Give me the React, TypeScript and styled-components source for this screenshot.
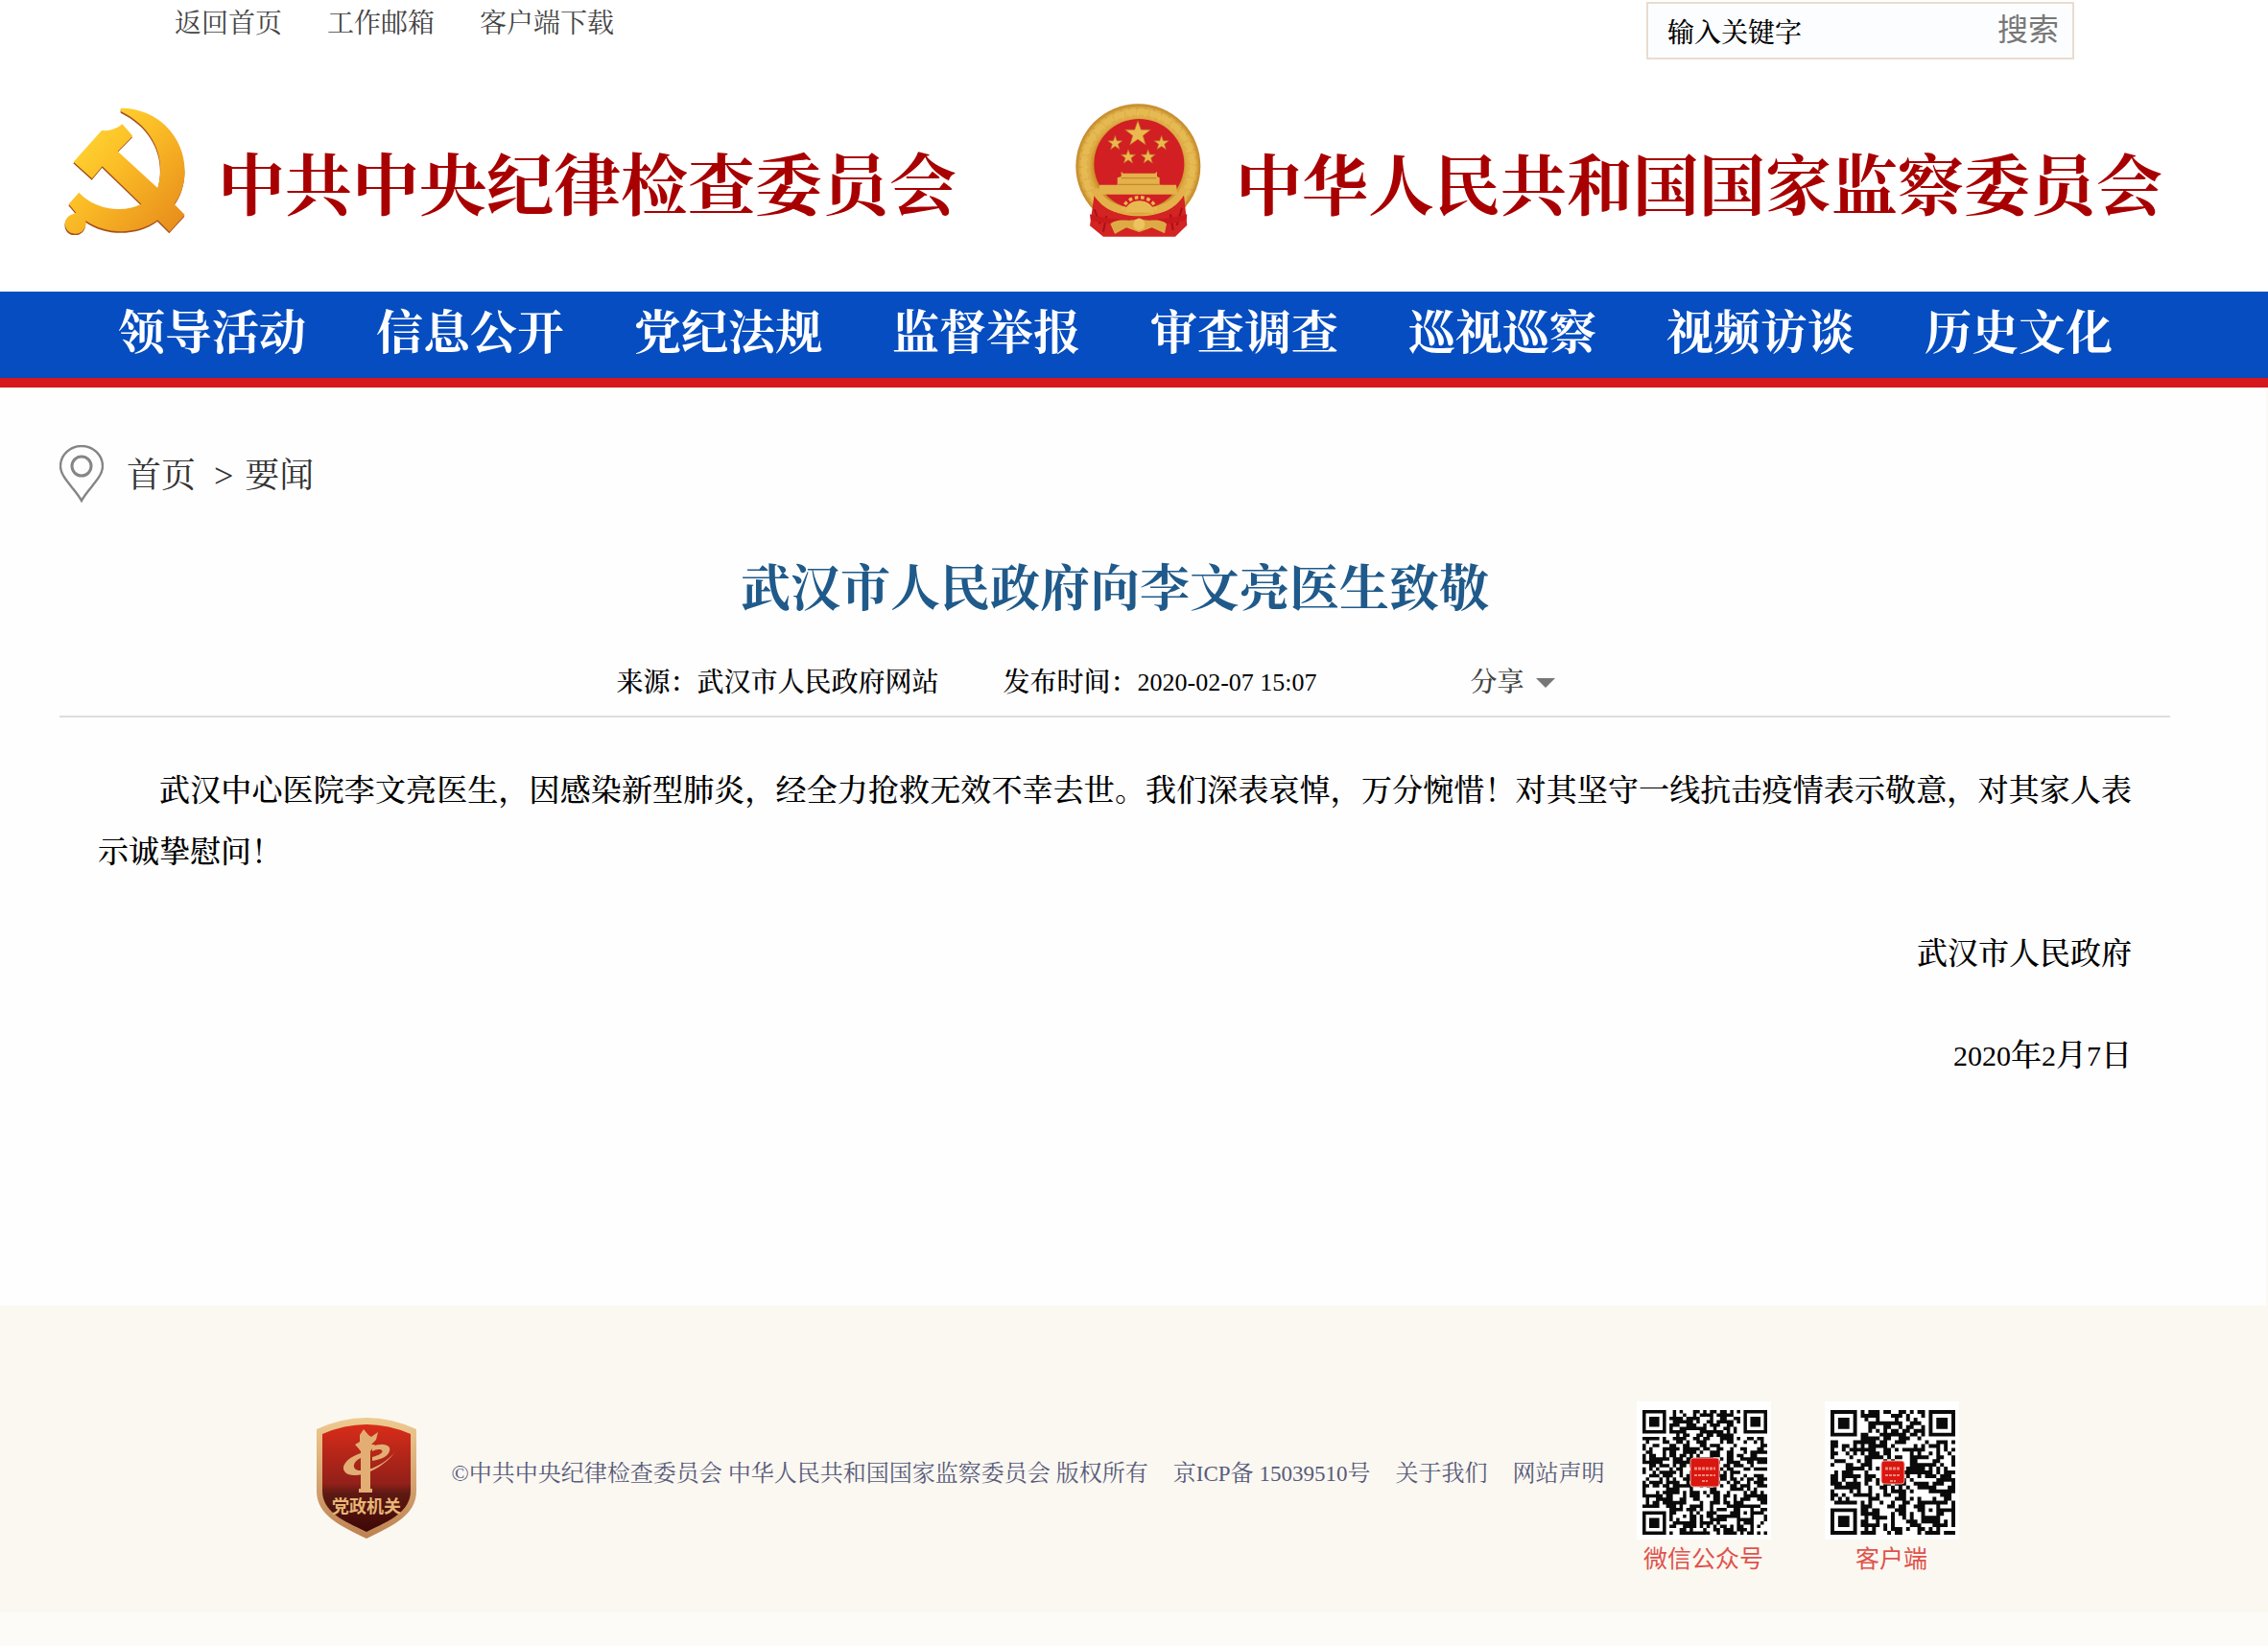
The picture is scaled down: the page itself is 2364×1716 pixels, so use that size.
import React from "react";
import styled, { createGlobalStyle } from "styled-components";

const serif = `"Liberation Serif", "Noto Serif CJK SC", "Noto Sans CJK SC", serif`;
const sans = `"Noto Sans CJK SC", sans-serif`;

const GlobalStyle = createGlobalStyle`
  *, *::before, *::after { box-sizing: border-box; }
  body { margin: 0; background: #fcfbf8; font-family: ${serif}; color: #000; }
  a { color: inherit; text-decoration: none; }
  h1, p, ul, figure { margin: 0; padding: 0; }
  ul { list-style: none; }
  button, input { font: inherit; }
  svg { display: block; flex: none; }
`;

const Page = styled.div`
  background: #fefefe;
  box-shadow: inset -2px 0 #fcf9f3;
`;

const Container = styled.div`
  max-width: 2240px;
  margin: 0 auto;
  padding-right: 40px;
`;

/* ---------- header ---------- */

const Header = styled.header`
  background: #fff;
`;

const TopBar = styled.div`
  display: flex;
  justify-content: space-between;
  align-items: flex-start;
  padding: 2px 100px 0 120px;
`;

const TopLinks = styled.nav`
  display: flex;
  gap: 47px;
  font-size: 28px;
  line-height: 46px;
  color: #444;
`;

const SearchForm = styled.form`
  display: flex;
  align-items: center;
  width: 446px;
  height: 60px;
  border: 2px solid #e9dccf;
  background: #fcfdff;
`;

const SearchInput = styled.input`
  flex: 1;
  min-width: 0;
  height: 56px;
  padding: 0 20px;
  border: 0;
  outline: 0;
  background: transparent;
  font-size: 28px;
  font-weight: 500;
  color: #000;
`;

const SearchButton = styled.button`
  padding: 0 14px 8px 0;
  border: 0;
  background: transparent;
  font-family: ${sans};
  font-size: 32px;
  line-height: 48px;
  color: #777;
`;

const Brands = styled.div`
  display: flex;
  justify-content: space-between;
  padding: 44px 8px 55px 3px;
`;

const Brand = styled.a<{ $gap: number; $size: number }>`
  display: flex;
  align-items: center;
  gap: ${(p) => p.$gap}px;
  font-size: ${(p) => p.$size}px;
  font-weight: 700;
  line-height: 106px;
  color: #a80000;
  white-space: nowrap;
`;

const BrandName = styled.span`
  padding-top: 36px;
`;

const MainNav = styled.nav`
  background: #054dc0;
  border-bottom: 10px solid #d6181c;
`;

const NavList = styled.ul`
  display: flex;
  justify-content: space-between;
  padding: 0 60px 2px 61px;
  font-size: 49px;
  font-weight: 700;
  line-height: 88px;
  color: #fff;
  white-space: nowrap;
`;

/* ---------- article ---------- */

const Crumbs = styled.nav`
  display: flex;
  align-items: center;
  padding-top: 60px;
  font-size: 36px;
  line-height: 56px;
  color: #333;
`;

const CrumbText = styled.div`
  display: flex;
  padding: 4px 0 0 24px;
`;

const CrumbSeparator = styled.span`
  margin: 0 12px 0 19px;
`;

const Title = styled.h1`
  padding-top: 53px;
  font-size: 52px;
  font-weight: 700;
  line-height: 76px;
  text-align: center;
  color: #1f5a8a;
`;

const Meta = styled.div`
  display: flex;
  justify-content: center;
  align-items: center;
  padding: 32px 61px 7px 0;
  border-bottom: 2px solid #ddd;
  font-size: 28px;
  font-weight: 500;
  line-height: 54px;
`;

const PublishTime = styled.span`
  display: flex;
  margin: 0 160px 0 67px;
`;

const Clock = styled.time`
  font-size: 26px;
`;

const ShareButton = styled.button`
  display: flex;
  align-items: center;
  gap: 12px;
  padding: 0;
  border: 0;
  background: transparent;
  color: #444;
`;

const Caret = styled.span`
  border: 10px solid transparent;
  border-top-color: #777;
  border-bottom: 0;
`;

const Body = styled.article`
  padding: 44px 40px 228px;
  font-size: 32px;
  font-weight: 500;
  line-height: 64px;
`;

const Paragraph = styled.p`
  text-indent: 2em;
  text-align: justify;
`;

const SignOff = styled.p`
  padding-top: 42px;
  text-align: right;
`;

const Figures = styled.span<{ $size: number }>`
  font-size: ${(p) => p.$size}px;
`;

/* ---------- footer ---------- */

const Footer = styled.footer`
  display: flex;
  justify-content: center;
  align-items: flex-start;
  min-height: 320px;
  padding: 100px 0 38px 8px;
  background: #fbf8f1;
`;

const FooterLane = styled.div`
  display: flex;
  align-items: center;
  height: 150px;
  gap: 36px;
`;

const BadgeLink = styled.a`
  padding-top: 10px;
`;

const FooterText = styled.div`
  display: flex;
  gap: 26px;
  font-size: 24px;
  line-height: 36px;
  color: #585b7b;
  white-space: nowrap;
`;

const Codes = styled.div`
  display: flex;
  gap: 56px;
  margin-left: 33px;
`;

const CodeFigure = styled.figure`
  width: 140px;
`;

const CodeCaption = styled.figcaption`
  font-family: ${sans};
  font-size: 25px;
  line-height: 36px;
  text-align: center;
  color: #e0524c;
`;

/* ---------- drawings ---------- */

const sicklePath =
  "M228 68 C340 68 428 155 428 265 C428 305 415 343 395 368 L428 402 L380 455 L343 418 C280 465 180 465 118 420 C122 445 105 461 85 461 C50 461 42 415 72 402 L88 395 L65 368 L97 332 C150 388 235 396 292 368 L170 250 L138 288 L80 236 L168 138 C190 140 212 135 232 118 L265 155 L218 203 L343 318 C370 230 335 130 228 78Z";

function PartyEmblem() {
  return (
    <svg width="130" height="135" viewBox="45 60 390 405" aria-hidden="true">
      <defs>
        <linearGradient id="gold" x1="0" y1="0" x2="1" y2="1">
          <stop offset="0.1" stopColor="#ffd934" />
          <stop offset="0.45" stopColor="#fbbd26" />
          <stop offset="1" stopColor="#e5881a" />
        </linearGradient>
      </defs>
      <path d={sicklePath} fill="#a6501c" transform="translate(-1 5)" />
      <path d={sicklePath} fill="url(#gold)" />
    </svg>
  );
}

function starPoints(cx: number, cy: number, r: number) {
  return Array.from({ length: 10 }, (_, i) => {
    const radius = i % 2 ? r * 0.4 : r;
    const angle = (Math.PI / 5) * i - Math.PI / 2;
    return `${(cx + radius * Math.cos(angle)).toFixed(1)},${(cy + radius * Math.sin(angle)).toFixed(1)}`;
  }).join(" ");
}

const stars: [number, number, number][] = [
  [258, 149, 42],
  [187, 178, 24],
  [332, 178, 24],
  [228, 221, 24],
  [290, 221, 24],
];

function StateEmblem() {
  return (
    <svg width="132" height="143" viewBox="60 48 396 429" aria-hidden="true">
      <defs>
        <radialGradient id="rim" cx="0.5" cy="0.5" r="0.5">
          <stop offset="0.7" stopColor="#c98b22" />
          <stop offset="0.84" stopColor="#eec45c" />
          <stop offset="1" stopColor="#c48a2a" />
        </radialGradient>
      </defs>
      <circle cx="259" cy="250" r="195" fill="url(#rim)" />
      <circle cx="259" cy="250" r="168" fill="none" stroke="#dfae48" strokeWidth="34" strokeDasharray="18 6" />
      <circle cx="259" cy="250" r="170" fill="none" stroke="#e6ba52" strokeWidth="18" strokeDasharray="34 4" />
      <circle cx="262" cy="243" r="141" fill="#d11f24" />
      <path d="M122 338 L108 436 L150 470 L375 470 L412 434 L402 338 C372 385 330 404 262 406 C195 404 150 385 122 338Z" fill="#d32322" />
      <path d="M122 385 L140 430 M396 380 L380 435 M360 400 L368 450 M160 405 L150 455" stroke="#a31318" strokeWidth="6" fill="none" />
      <path d="M110 325 C150 395 200 400 228 392 L225 378 C180 370 150 350 132 318Z M412 325 C376 392 325 402 296 392 L300 378 C345 370 375 350 394 318Z" fill="#e3b04a" />
      {stars.map(([x, y, r]) => (
        <polygon key={`${x}-${y}`} points={starPoints(x, y, r)} fill="#ecb850" stroke="#b86a1c" strokeWidth="2" />
      ))}
      <path d="M206 266 L212 272 H312 L318 266 V282 L326 286 V308 H378 L382 338 H134 L138 308 H194 V286 L206 282Z" fill="#e4b14b" />
      <path d="M206 287 H316 M196 307 H328" stroke="#c58a2c" strokeWidth="4" />
      <path d="M218 395 C218 345 308 345 308 395Z" fill="#e8b951" />
      <path d="M212 388 A50 40 0 0 1 314 388" fill="none" stroke="#e8b951" strokeWidth="10" strokeDasharray="11 8" />
      <path d="M108 400 C180 425 340 425 412 400 L410 418 C340 440 180 440 110 418Z" fill="#c9191d" />
      <path d="M172 430 C200 408 235 428 262 412 C290 428 322 408 348 430 L342 460 L302 442 L262 456 L222 442 L186 462Z" fill="#ddab45" />
      <circle cx="262" cy="432" r="18" fill="#edc35f" />
    </svg>
  );
}

function PinIcon() {
  return (
    <svg width="46" height="60" viewBox="0 0 46 60" fill="none" stroke="#858585" strokeWidth="2.4" aria-hidden="true">
      <path d="M23 58 C16 45 1 34 1 22 A22 21 0 0 1 45 22 C45 34 30 45 23 58Z" />
      <circle cx="23" cy="22" r="10" strokeWidth="3" />
    </svg>
  );
}

const BadgeLabel = styled.text`
  font-family: ${sans};
  font-size: 18px;
  font-weight: 700;
  fill: #e6b677;
`;

function GovernmentBadge() {
  return (
    <svg width="104" height="126" viewBox="0 0 104 126" role="img" aria-label="党政机关">
      <defs>
        <linearGradient id="shield" x1="0" y1="0" x2="0" y2="1">
          <stop offset="0" stopColor="#d92c1a" />
          <stop offset="0.35" stopColor="#ab2418" />
          <stop offset="0.55" stopColor="#93201a" />
          <stop offset="0.64" stopColor="#5f1913" />
          <stop offset="1" stopColor="#3d0806" />
        </linearGradient>
        <linearGradient id="frame" x1="0" y1="0" x2="0" y2="1">
          <stop offset="0" stopColor="#efcb91" />
          <stop offset="1" stopColor="#bd8152" />
        </linearGradient>
      </defs>
      <path d="M0 12 Q52 -12 104 12 V76 C104 102 80 112 52 126 C24 112 0 102 0 76Z" fill="url(#frame)" />
      <path d="M6 17 Q52 -3 98 17 V76 C98 98 77 107 52 119 C27 107 6 98 6 76Z" fill="url(#shield)" />
      <g fill="#e2ae74">
        <path d="M49 12 L54 18 L57 20 L64 15 L62 23 L57 28 L56 34 V76 H46 V34 L40 28 L45 25 V18Z" />
        <path d="M41 28 H61 L56 35 H46Z" />
        <path d="M58 30 C70 25 80 29 75 37 C72 42 64 44 58 45 V41 C66 39 70 36 68 34 C66 32 62 33 58 35Z" />
        <path d="M46 37 C30 42 22 54 33 59 C50 64 74 48 83 34 C76 44 60 55 46 55 C36 55 37 46 46 42Z" />
        <rect x="44" y="74" width="14" height="4" />
      </g>
      <BadgeLabel x="52" y="99" textAnchor="middle">
        党政机关
      </BadgeLabel>
    </svg>
  );
}

/** Dark modules of a code: three finders, one alignment mark and a seeded fill. */
function buildModules(size: number, seed: number) {
  let state = seed;
  const random = () => {
    state = (state * 1103515245 + 12345) % 2147483648;
    return state / 2147483648;
  };
  const ring = (dx: number, dy: number) => Math.max(Math.abs(dx), Math.abs(dy));
  let d = "";
  for (let y = 0; y < size; y++) {
    for (let x = 0; x < size; x++) {
      let dark = random() < 0.55;
      const corners = [
        [3, 3],
        [size - 4, 3],
        [3, size - 4],
      ];
      for (const [cx, cy] of corners) {
        const r = ring(x - cx, y - cy);
        if (r <= 4) dark = r === 3 || r <= 1;
      }
      const a = ring(x - (size - 7), y - (size - 7));
      if (a <= 2) dark = a !== 1;
      if (dark) d += `M${x} ${y}h1v1h-1z`;
    }
  }
  return d;
}

interface QrProps {
  size: number;
  seed: number;
  logo: number;
}

function QrCode({ size, seed, logo }: QrProps) {
  const scale = 130 / size;
  const corner = (140 - logo) / 2;
  return (
    <svg width="140" height="144" viewBox="0 0 140 144" aria-hidden="true">
      <rect width="140" height="144" fill="#fff" />
      <path d={buildModules(size, seed)} transform={`translate(6 9) scale(${scale})`} fill="#0a0a0a" />
      <rect x={corner + 1} y={corner + 4} width={logo} height={logo} rx="3" fill="#d9160f" stroke="#f3a8a0" />
      <g stroke="#f08a80" strokeDasharray="3 1">
        <path d={`M${corner + 5} 70h${logo - 8}`} strokeWidth="3" />
        <path d={`M${corner + 5} 77h${logo - 8}`} strokeWidth="2" />
        <path d="M68 83h6" strokeWidth="2" />
      </g>
    </svg>
  );
}

/* ---------- page ---------- */

const topLinks = ["返回首页", "工作邮箱", "客户端下载"];
const sections = ["领导活动", "信息公开", "党纪法规", "监督举报", "审查调查", "巡视巡察", "视频访谈", "历史文化"];

export default function App() {
  return (
    <>
      <GlobalStyle />
      <Page>
        <Header>
          <Container>
            <TopBar>
              <TopLinks>
                {topLinks.map((label) => (
                  <a href="#" key={label}>
                    {label}
                  </a>
                ))}
              </TopLinks>
              <SearchForm onSubmit={(event) => event.preventDefault()}>
                <SearchInput type="text" aria-label="输入关键字" defaultValue="输入关键字" />
                <SearchButton type="submit">搜索</SearchButton>
              </SearchForm>
            </TopBar>
            <Brands>
              <Brand href="#" $gap={32} $size={70}>
                <PartyEmblem />
                <BrandName>中共中央纪律检查委员会</BrandName>
              </Brand>
              <Brand href="#" $gap={36} $size={69}>
                <StateEmblem />
                <BrandName>中华人民共和国国家监察委员会</BrandName>
              </Brand>
            </Brands>
          </Container>
          <MainNav>
            <Container>
              <NavList>
                {sections.map((label) => (
                  <li key={label}>
                    <a href="#">{label}</a>
                  </li>
                ))}
              </NavList>
            </Container>
          </MainNav>
        </Header>

        <Container as="main">
          <Crumbs>
            <PinIcon />
            <CrumbText>
              <a href="#">首页</a>
              <CrumbSeparator>&gt;</CrumbSeparator>
              <a href="#">要闻</a>
            </CrumbText>
          </Crumbs>
          <Title>武汉市人民政府向李文亮医生致敬</Title>
          <Meta>
            <span>来源：武汉市人民政府网站</span>
            <PublishTime>
              发布时间：<Clock dateTime="2020-02-07T15:07">2020-02-07 15:07</Clock>
            </PublishTime>
            <ShareButton type="button">
              分享
              <Caret />
            </ShareButton>
          </Meta>
          <Body>
            <Paragraph>
              武汉中心医院李文亮医生，因感染新型肺炎，经全力抢救无效不幸去世。我们深表哀悼，万分惋惜！对其坚守一线抗击疫情表示敬意，对其家人表示诚挚慰问！
            </Paragraph>
            <SignOff>武汉市人民政府</SignOff>
            <SignOff>
              <Figures $size={30}>2020</Figures>年<Figures $size={30}>2</Figures>月<Figures $size={30}>7</Figures>日
            </SignOff>
          </Body>
        </Container>
      </Page>

      <Footer>
        <FooterLane>
          <BadgeLink href="#">
            <GovernmentBadge />
          </BadgeLink>
          <FooterText>
            <span>©中共中央纪律检查委员会 中华人民共和国国家监察委员会 版权所有</span>
            <a href="#">
              京<Figures $size={23}>ICP</Figures>备 <Figures $size={23}>15039510</Figures>号
            </a>
            <a href="#">关于我们</a>
            <a href="#">网站声明</a>
          </FooterText>
        </FooterLane>
        <Codes>
          <CodeFigure>
            <QrCode size={37} seed={20207} logo={30} />
            <CodeCaption>微信公众号</CodeCaption>
          </CodeFigure>
          <CodeFigure>
            <QrCode size={33} seed={9157} logo={24} />
            <CodeCaption>客户端</CodeCaption>
          </CodeFigure>
        </Codes>
      </Footer>
    </>
  );
}
